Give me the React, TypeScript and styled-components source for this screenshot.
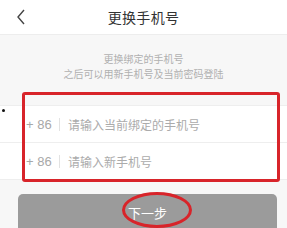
import React from 'react';
import styled, { createGlobalStyle } from 'styled-components';

const GlobalStyle = createGlobalStyle`
	html, body {
		margin: 0;
		padding: 0;
		background: #f7f7f7;
		font-family: 'Noto Sans CJK SC', 'Noto Sans', sans-serif;
	}
`;

const Page = styled.div`
	position: relative;
	width: 287px;
	height: 228px;
	overflow: hidden;
	background: #f7f7f7;
`;

const Header = styled.div`
	position: relative;
	display: flex;
	align-items: center;
	justify-content: center;
	height: 34px;
	background: #fff;
	border-bottom: 1px solid #ededed;
`;

const Back = styled.div`
	position: absolute;
	left: 16px;
	top: 9px;
	display: flex;
`;

const Title = styled.div`
	font-size: 14px;
	color: #333;
	letter-spacing: 0.3px;
`;

const Intro = styled.div`
	display: flex;
	flex-direction: column;
	align-items: center;
	padding-top: 16px;
	font-size: 10px;
	line-height: 15px;
	color: #b0b0b0;
`;

const List = styled.div`
	margin-top: 24px;
	background: #fff;
	border-top: 1px solid #eee;
	border-bottom: 1px solid #eee;
`;

const Row = styled.div<{ $last?: boolean }>`
	display: flex;
	align-items: center;
	height: 36px;
	padding-left: 26px;
	border-bottom: ${p => (p.$last ? 'none' : '1px solid #eee')};
`;

const Prefix = styled.span`
	font-family: 'Liberation Sans', Arial, sans-serif;
	font-size: 13px;
	color: #a8a8a8;
	width: 33px;
`;

const Divider = styled.span`
	width: 1px;
	height: 13px;
	background: #e2e2e2;
	margin-right: 8px;
`;

const Placeholder = styled.span`
	font-size: 12px;
	color: #ababab;
`;

const NextButton = styled.div`
	display: flex;
	align-items: center;
	justify-content: center;
	margin: 14px 10px 0 18px;
	height: 40px;
	border-radius: 5px;
	background: #9b9b9b;
	color: #fff;
	font-size: 13px;
	padding-bottom: 4px;
	box-sizing: border-box;
`;

// red annotation marks drawn over the screenshot
const Mark = styled.div`
	position: absolute;
	border: 3px solid #d8242a;
	box-sizing: border-box;
	pointer-events: none;
`;

const BoxMark = styled(Mark)`
	left: 22px;
	top: 92px;
	width: 258px;
	height: 90px;
	border-radius: 3px;
`;

const EllipseMark = styled(Mark)`
	left: 122px;
	top: 192px;
	width: 70px;
	height: 36px;
	border-radius: 50%;
`;

const Dot = styled.div`
	position: absolute;
	left: 2px;
	top: 109px;
	width: 3px;
	height: 3px;
	border-radius: 50%;
	background: #111;
`;

const App = () => {
	return (
		<Page>
			<GlobalStyle />
			<Header>
				<Back>
					<svg width="10" height="16" viewBox="0 0 10 16">
						<path d="M8 1 L2 8 L8 15" fill="none" stroke="#444" strokeWidth="1.4" />
					</svg>
				</Back>
				<Title>更换手机号</Title>
			</Header>
			<Intro>
				<span>更换绑定的手机号</span>
				<span>之后可以用新手机号及当前密码登陆</span>
			</Intro>
			<List>
				<Row>
					<Prefix>+ 86</Prefix>
					<Divider />
					<Placeholder>请输入当前绑定的手机号</Placeholder>
				</Row>
				<Row $last>
					<Prefix>+ 86</Prefix>
					<Divider />
					<Placeholder>请输入新手机号</Placeholder>
				</Row>
			</List>
			<NextButton>下一步</NextButton>

			<BoxMark />
			<EllipseMark />
			<Dot />
		</Page>
	);
};

export default App;
